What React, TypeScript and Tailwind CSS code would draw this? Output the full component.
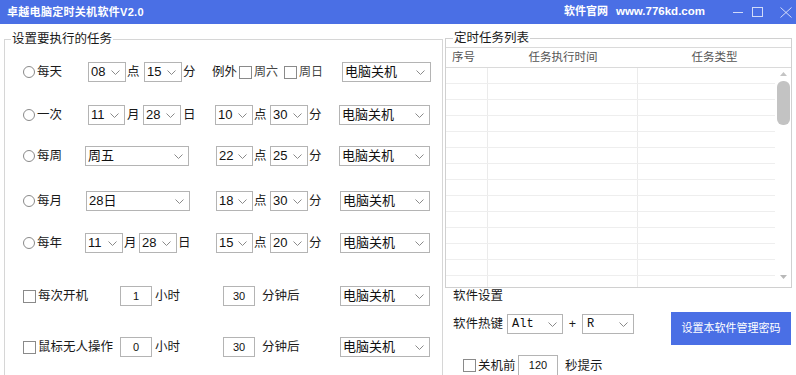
import React from 'react';

const font = "font-['Liberation_Sans','Noto_Sans_CJK_SC',sans-serif]";

const Chevron: React.FC = () => (
  <svg width="9" height="5" viewBox="0 0 9 5" className="shrink-0">
    <path d="M0.5 0.5 L4.5 4.5 L8.5 0.5" fill="none" stroke="#8a8a8a" strokeWidth="1" />
  </svg>
);

// combobox like the winforms ones
const Select: React.FC<{ value: string; className: string; mono?: boolean }> = ({ value, className, mono }) => (
  <div className={`flex items-center h-[20px] border border-[#b4b4b4] bg-white pl-[2px] pr-[5px] shrink-0 ${className}`}>
    <span
      className={`flex-1 leading-[18px] text-[#111] ${
        mono ? "font-['Liberation_Mono',monospace] text-[12px] pl-[2px]" : 'text-[13px]'
      }`}
    >
      {value}
    </span>
    <Chevron />
  </div>
);

const Input: React.FC<{ value: string; className: string }> = ({ value, className }) => (
  <div className={`flex items-center justify-center h-[20px] border border-[#b4b4b4] bg-white text-[11px] text-[#111] shrink-0 ${className}`}>
    {value}
  </div>
);

const Radio: React.FC = () => <span className="inline-block w-[12px] h-[12px] rounded-full border border-[#8a8a8a] bg-white shrink-0" />;

const Check: React.FC = () => <span className="inline-block w-[13px] h-[13px] border border-[#8a8a8a] bg-white shrink-0" />;

const Txt: React.FC<{ children: React.ReactNode; className: string }> = ({ children, className }) => (
  <span className={`shrink-0 text-[12.5px] leading-[20px] text-[#1a1a1a] whitespace-nowrap ${className}`}>{children}</span>
);

const Action: React.FC<{ className: string }> = ({ className }) => <Select value="电脑关机" className={className} />;

const TitleBar: React.FC = () => (
  <div className="flex items-center h-[24px] bg-[#4a6fe5] text-white">
    <span className="pl-[7px] text-[11px] font-bold tracking-[0.3px]">卓越电脑定时关机软件V2.0</span>
    <span className="ml-auto text-[11px] font-bold">
      软件官网<span className="ml-[8px] text-[11.5px]">www.776kd.com</span>
    </span>
    <svg width="10" height="10" viewBox="0 0 10 10" className="ml-[28px]">
      <path d="M0 5.5 H10" stroke="rgba(255,255,255,0.75)" strokeWidth="1" />
    </svg>
    <svg width="11" height="10" viewBox="0 0 11 10" className="ml-[9px]">
      <rect x="0.5" y="0.5" width="10" height="9" fill="none" stroke="rgba(255,255,255,0.75)" strokeWidth="1" />
    </svg>
    <svg width="12" height="11" viewBox="0 0 12 11" className="ml-[17px] mr-[4px]">
      <path d="M0.5 0.5 L11.5 10.5 M11.5 0.5 L0.5 10.5" stroke="rgba(255,255,255,0.75)" strokeWidth="1" />
    </svg>
  </div>
);

const TaskGroup: React.FC = () => (
  <div className="relative ml-[4px] mt-[15px] w-[439px] h-[400px] border border-[#d6d6d6] shrink-0">
    <span className="absolute left-[6px] -top-[8px] bg-white px-[1px] text-[12.5px] leading-[14px] text-[#1a1a1a]">
      设置要执行的任务
    </span>
    <div className="flex flex-col pt-[22px] pl-[18px]">
      {/* 每天 */}
      <div className="flex items-center h-[20px]">
        <div className="flex items-center w-[65px] shrink-0">
          <Radio />
          <Txt className="ml-[2px]">每天</Txt>
        </div>
        <Select value="08" className="w-[38px]" />
        <Txt className="w-[18px] pl-[1px]">点</Txt>
        <Select value="15" className="w-[38px]" />
        <Txt className="w-[29px] pl-[1px]">分</Txt>
        <Txt className="w-[28px] pl-[1px]">例外</Txt>
        <Check />
        <Txt className="w-[32px] pl-[2px] text-[12px] text-[#444]">周六</Txt>
        <Check />
        <Txt className="w-[45px] pl-[2px] text-[12px] text-[#444]">周日</Txt>
        <Action className="w-[89px]" />
      </div>

      {/* 一次 */}
      <div className="flex items-center h-[20px] mt-[23px]">
        <div className="flex items-center w-[65px] shrink-0">
          <Radio />
          <Txt className="ml-[2px]">一次</Txt>
        </div>
        <Select value="11" className="w-[37px]" />
        <Txt className="w-[18px] pl-[2px]">月</Txt>
        <Select value="28" className="w-[38px]" />
        <Txt className="w-[34px] pl-[2px]">日</Txt>
        <Select value="10" className="w-[38px]" />
        <Txt className="w-[17px] pl-[1px]">点</Txt>
        <Select value="30" className="w-[38px]" />
        <Txt className="w-[31px] pl-[1px]">分</Txt>
        <Action className="w-[91px]" />
      </div>

      {/* 每周 */}
      <div className="flex items-center h-[20px] mt-[21px]">
        <div className="flex items-center w-[62px] shrink-0">
          <Radio />
          <Txt className="ml-[2px]">每周</Txt>
        </div>
        <Select value="周五" className="w-[104px]" />
        <span className="w-[27px] shrink-0" />
        <Select value="22" className="w-[37px]" />
        <Txt className="w-[17px] pl-[1px]">点</Txt>
        <Select value="25" className="w-[38px]" />
        <Txt className="w-[31px] pl-[1px]">分</Txt>
        <Action className="w-[91px]" />
      </div>

      {/* 每月 */}
      <div className="flex items-center h-[20px] mt-[25px]">
        <div className="flex items-center w-[63px] shrink-0">
          <Radio />
          <Txt className="ml-[2px]">每月</Txt>
        </div>
        <Select value="28日" className="w-[104px]" />
        <span className="w-[26px] shrink-0" />
        <Select value="18" className="w-[37px]" />
        <Txt className="w-[17px] pl-[1px]">点</Txt>
        <Select value="30" className="w-[38px]" />
        <Txt className="w-[32px] pl-[1px]">分</Txt>
        <Action className="w-[90px]" />
      </div>

      {/* 每年 */}
      <div className="flex items-center h-[20px] mt-[22px]">
        <div className="flex items-center w-[62px] shrink-0">
          <Radio />
          <Txt className="ml-[2px]">每年</Txt>
        </div>
        <Select value="11" className="w-[38px]" />
        <Txt className="w-[16px] pl-[1px]">月</Txt>
        <Select value="28" className="w-[38px]" />
        <Txt className="w-[39px] pl-[1px]">日</Txt>
        <Select value="15" className="w-[37px]" />
        <Txt className="w-[17px] pl-[1px]">点</Txt>
        <Select value="20" className="w-[38px]" />
        <Txt className="w-[32px] pl-[1px]">分</Txt>
        <Action className="w-[90px]" />
      </div>

      {/* 每次开机 */}
      <div className="flex items-center h-[20px] mt-[33px]">
        <div className="flex items-center w-[97px] shrink-0">
          <Check />
          <Txt className="ml-[2px]">每次开机</Txt>
        </div>
        <Input value="1" className="w-[32px]" />
        <Txt className="w-[71px] pl-[3px]">小时</Txt>
        <Input value="30" className="w-[32px]" />
        <Txt className="w-[85px] pl-[7px]">分钟后</Txt>
        <Action className="w-[90px]" />
      </div>

      {/* 鼠标无人操作 */}
      <div className="flex items-center h-[20px] mt-[31px]">
        <div className="flex items-center w-[97px] shrink-0">
          <Check />
          <Txt className="ml-[2px]">鼠标无人操作</Txt>
        </div>
        <Input value="0" className="w-[32px]" />
        <Txt className="w-[71px] pl-[3px]">小时</Txt>
        <Input value="30" className="w-[32px]" />
        <Txt className="w-[85px] pl-[7px]">分钟后</Txt>
        <Action className="w-[90px]" />
      </div>
    </div>
  </div>
);

const rows = Array.from({ length: 14 }, (_, i) => i);

const TaskList: React.FC = () => (
  <div className="relative mt-[14px] h-[250px] border border-[#d0d0d0]">
    <span className="absolute left-[7px] -top-[8px] bg-white px-[1px] text-[12.5px] leading-[14px] text-[#1a1a1a]">
      定时任务列表
    </span>
    <div className="mt-[8px] flex items-center h-[21px] border-t border-b border-[#dadada] text-[11.5px] text-[#555]">
      <span className="w-[42px] pl-[6px] shrink-0">序号</span>
      <span className="w-[150px] text-center shrink-0">任务执行时间</span>
      <span className="flex-1 text-center">任务类型</span>
    </div>
    <div className="flex h-[219px] overflow-hidden">
      <div className="flex-1 flex flex-col">
        {rows.map((r) => (
          <div key={r} className="flex h-[16px] shrink-0 border-b border-[#eeeeee]">
            <span className="w-[42px] border-r border-[#ebebeb] shrink-0" />
            <span className="w-[150px] border-r border-[#ebebeb] shrink-0" />
            <span className="flex-1" />
          </div>
        ))}
      </div>
      <div className="w-[16px] flex flex-col items-center shrink-0">
        <svg width="7" height="4" viewBox="0 0 7 4" className="mt-[4px]">
          <path d="M0 4 L3.5 0 L7 4 Z" fill="#c4c4c4" />
        </svg>
        <div className="mt-[5px] w-[13px] h-[44px] rounded-[6px] bg-[#c3c3c3]" />
        <svg width="7" height="4" viewBox="0 0 7 4" className="mt-auto mb-[8px]">
          <path d="M0 0 L7 0 L3.5 4 Z" fill="#b8b8b8" />
        </svg>
      </div>
    </div>
  </div>
);

const Settings: React.FC = () => (
  <div>
    <div className="pl-[8px] mt-[1px] text-[12.5px] leading-[14px] text-[#1a1a1a]">软件设置</div>
    <div className="flex items-start mt-[9px] pl-[8px]">
      <div className="flex flex-col">
        <div className="flex items-center h-[20px] mt-[2px]">
          <Txt className="w-[54px]">软件热键</Txt>
          <Select value="Alt" mono className="w-[56px]" />
          <Txt className="w-[19px] text-center">+</Txt>
          <Select value="R" mono className="w-[52px]" />
        </div>
        <div className="flex items-center h-[21px] mt-[21px] pl-[10px]">
          <Check />
          <Txt className="w-[42px] pl-[2px]">关机前</Txt>
          <Input value="120" className="w-[40px] h-[21px]" />
          <Txt className="pl-[7px]">秒提示</Txt>
        </div>
      </div>
      <button className="ml-[37px] w-[120px] h-[33px] bg-[#4a6fe5] text-white text-[11px] shrink-0">
        设置本软件管理密码
      </button>
    </div>
  </div>
);

const App: React.FC = () => {
  return (
    <div className={`w-[796px] h-[375px] overflow-hidden bg-white ${font}`}>
      <TitleBar />
      <div className="flex items-start">
        <TaskGroup />
        <div className="ml-[2px] w-[347px] shrink-0">
          <TaskList />
          <Settings />
        </div>
      </div>
    </div>
  );
};

export default App;
